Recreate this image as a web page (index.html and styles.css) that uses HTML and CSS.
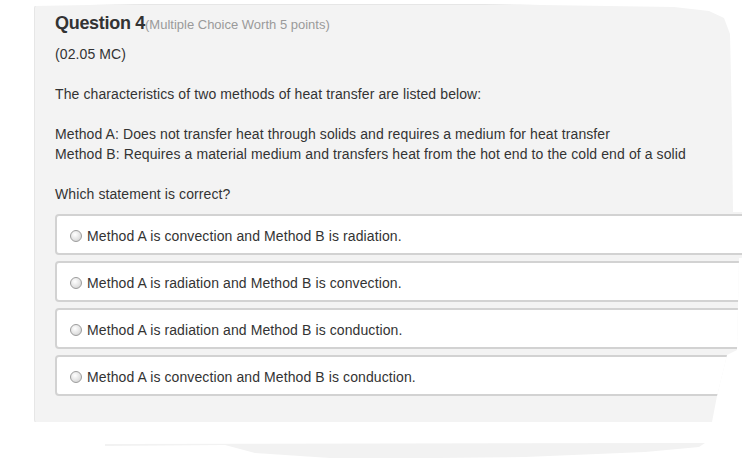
FILE: index.html
```
<!DOCTYPE html>
<html>
<head>
<meta charset="utf-8">
<link rel="stylesheet" href="styles.css">
</head>
<body>
<div class="page">
  <section class="card">
    <h2 class="title"><span class="qnum">Question 4</span><span class="qmeta">(Multiple Choice Worth 5 points)</span></h2>
    <p class="code">(02.05 MC)</p>
    <p class="para">The characteristics of two methods of heat transfer are listed below:</p>
    <p class="para">Method A: Does not transfer heat through solids and requires a medium for heat transfer<br>Method B: Requires a material medium and transfers heat from the hot end to the cold end of a solid</p>
    <p class="para">Which statement is correct?</p>
    <ul class="options">
      <li class="option"><span class="radio"></span><span>Method A is convection and Method B is radiation.</span></li>
      <li class="option"><span class="radio"></span><span>Method A is radiation and Method B is convection.</span></li>
      <li class="option"><span class="radio"></span><span>Method A is radiation and Method B is conduction.</span></li>
      <li class="option"><span class="radio"></span><span>Method A is convection and Method B is conduction.</span></li>
    </ul>
  </section>
  <div class="sliver"></div>
</div>
</body>
</html>
```

FILE: styles.css
```
html, body {
  margin: 0;
  padding: 0;
  background: #ffffff;
  overflow: hidden;
}

.page {
  width: 742px;
  height: 458px;
  overflow: hidden;
  font-family: "Liberation Sans", Arial, sans-serif;
  color: #333333;
  font-size: 14px;
  letter-spacing: 0.1px;
}

.card {
  margin: 4px 0 0 34px;
  width: 740px;
  box-sizing: border-box;
  padding: 5px 0 27px 20px;
  background: #f3f3f3;
  border: 1px solid #e6e6e6;
  border-radius: 4px;
  clip-path: polygon(0 2px, 110px 0, 450px 0, 640px 3px, 675px 7px, 690px 14px, 696px 30px, 698px 120px, 699px 208px, 740px 208px, 740px 252px, 705px 254px, 704px 300px, 703px 346px, 693px 351px, 683px 392px, 678px 418px, 0 418px);
}

.title {
  margin: 0;
  line-height: 24px;
  font-weight: normal;
}

.qnum {
  font-size: 18px;
  font-weight: bold;
  color: #333333;
  letter-spacing: -0.3px;
}

.qmeta {
  font-size: 13px;
  color: #9a9a9a;
  letter-spacing: 0;
}

.code {
  margin: 7px 0 0 0;
  line-height: 20px;
}

.para {
  margin: 20px 0 0 0;
  line-height: 20px;
}

.options {
  list-style: none;
  margin: 10px 0 0 0;
  padding: 0;
  display: flex;
  flex-direction: column;
  gap: 6px;
}

.option {
  display: flex;
  align-items: center;
  gap: 5px;
  height: 20px;
  padding: 10px 0 7px 13px;
  background: #ffffff;
  border: 2px solid #d2d2d2;
  border-radius: 4px;
  line-height: 20px;
}

.radio {
  width: 10px;
  height: 10px;
  border-radius: 50%;
  border: 1px solid #9c9c9c;
  background: radial-gradient(circle at 40% 35%, #ffffff 0%, #e4e4e4 55%, #c8c8c8 100%);
  flex: none;
}

.sliver {
  margin: 19px 0 0 105px;
  width: 600px;
  height: 16px;
  background: #f2f2f2;
  clip-path: polygon(0 1px, 100% 0, 99% 4px, 90% 9px, 70% 14px, 40% 16px, 25% 10px, 20% 2px, 0 3px);
}
```
